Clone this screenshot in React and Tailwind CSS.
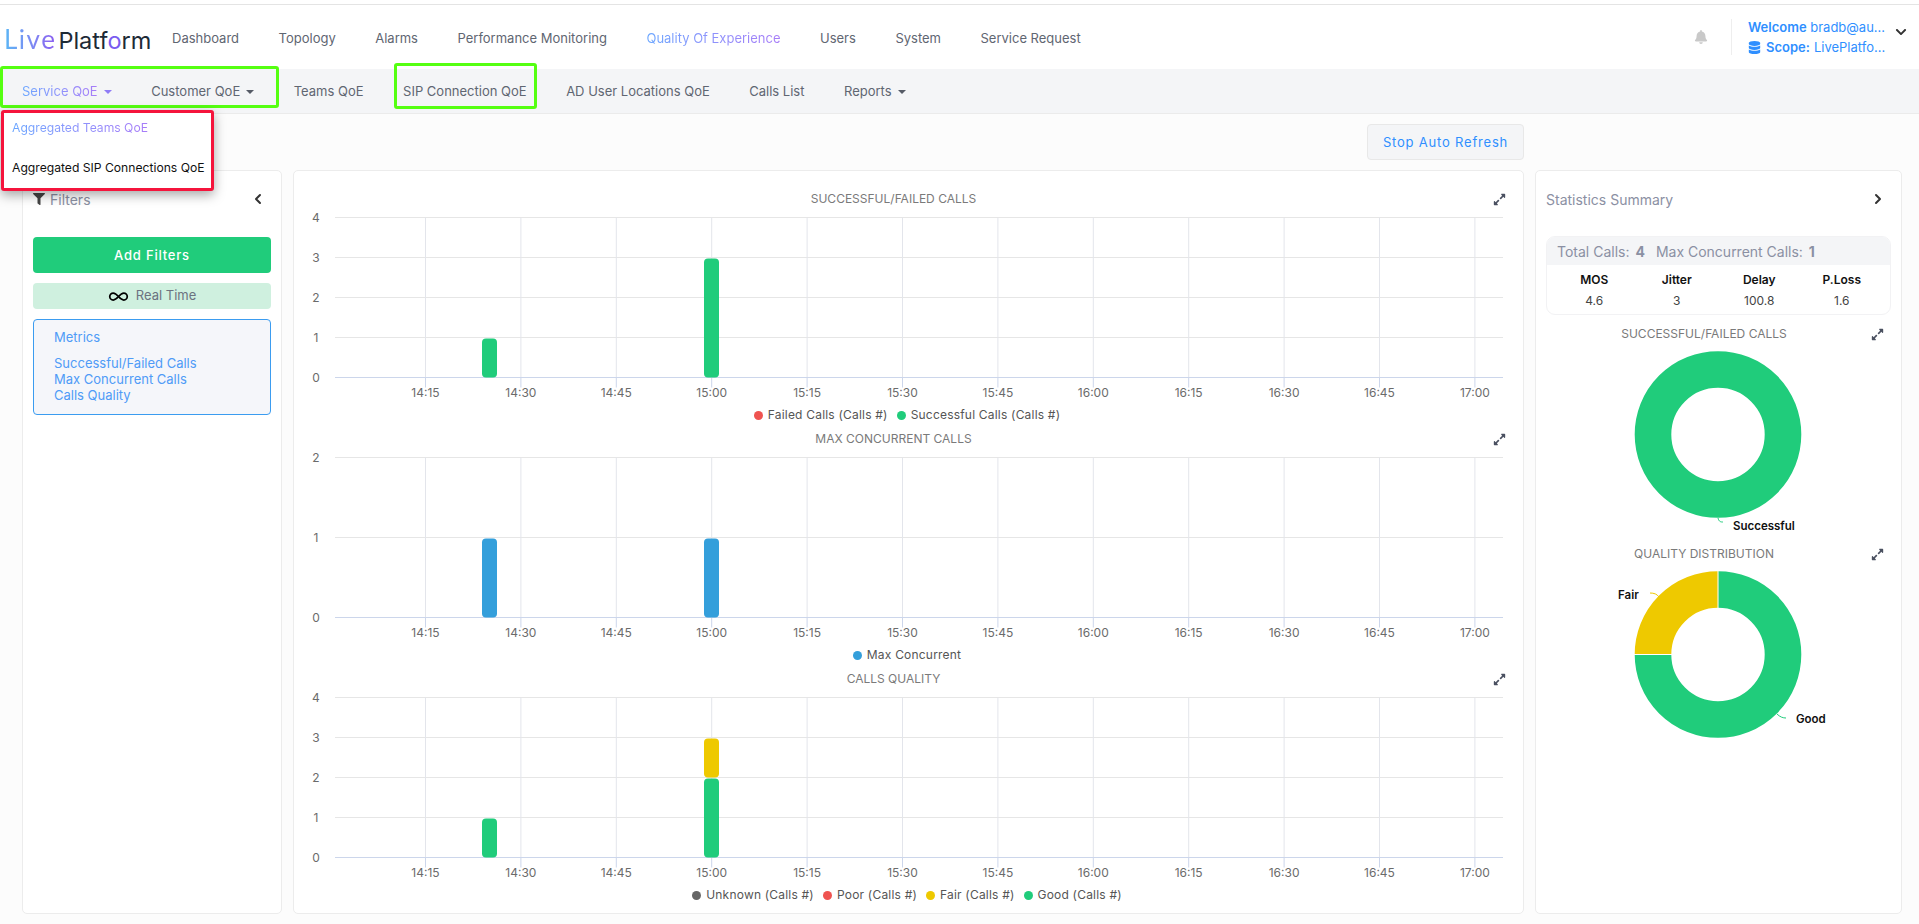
import React from "react";
import { FaBell, FaChevronDown, FaDatabase, FaExpandAlt, FaFilter } from "react-icons/fa";
import { ChevronLeft, ChevronRight, Infinity as InfinityIcon } from "lucide-react";

const GREEN = "#20cc7b";
const BLUE = "#349fdb";
const YELLOW = "#eec900";
const RED = "#ef5350";
const GREY = "#666666";

const topNav = ["Dashboard", "Topology", "Alarms", "Performance Monitoring", "Quality Of Experience", "Users", "System", "Service Request"];
const times = ["14:15", "14:30", "14:45", "15:00", "15:15", "15:30", "15:45", "16:00", "16:15", "16:30", "16:45", "17:00"];

const Caret = ({ className }) => (
    <span className={`ml-[6px] inline-block h-0 w-0 border-x-[4px] border-t-[4px] border-x-transparent ${className}`} />
);

const SubNav = () => (
    <div className="relative flex h-[45px] items-center gap-[39.5px] border-b border-[#ebebeb] bg-[#f4f5f7] pl-[22px] pt-[2px] text-[13px] text-[#5f6672]">
        <span className="flex items-center">
            <span className="bg-linear-to-r from-[#6aa6ff] to-[#a77cf8] bg-clip-text text-transparent">Service QoE</span>
            <Caret className="border-t-[#8f7cf6]" />
        </span>
        <span className="flex items-center">
            Customer QoE
            <Caret className="border-t-[#555b66]" />
        </span>
        <span>Teams QoE</span>
        <span>SIP Connection QoE</span>
        <span>AD User Locations QoE</span>
        <span>Calls List</span>
        <span className="flex items-center">
            Reports
            <Caret className="border-t-[#555b66]" />
        </span>
        {/* highlight boxes + open dropdown sit on top of the bar */}
        <div className="absolute left-0 top-[-3px] h-[42px] w-[279px] rounded-[3px] border-[3px] border-[#55ff11]" />
        <div className="absolute left-[394px] top-[-6px] h-[46px] w-[143px] rounded-[3px] border-[3px] border-[#55ff11]" />
        <div className="absolute left-[1px] top-[41px] z-10 flex h-[81px] w-[213px] flex-col justify-between rounded-[3px] border-[3px] border-[#f5143c] bg-white pb-[11px] pl-[8px] pt-[6px] text-[12.15px] shadow-[0_4px_12px_rgba(0,0,0,0.35)]">
            <span className="w-fit bg-linear-to-r from-[#6aa6ff] to-[#a77cf8] bg-clip-text text-transparent">Aggregated Teams QoE</span>
            <span className="text-[#111111]">Aggregated SIP Connections QoE</span>
        </div>
    </div>
);

const Header = () => (
    <div className="flex h-[64px] items-center bg-white pr-[12px]">
        <div className="flex w-[172px] items-baseline pl-[4px] pt-[5px] text-[23.5px] leading-none">
            <span className="mr-[2px] bg-linear-to-r from-[#58b6f5] to-[#8a5cf0] bg-clip-text font-[Lato,sans-serif] text-[26px] tracking-[1.5px] text-transparent">Live</span>
            <span className="font-normal text-[#1d2a36]">
                Platf<span className="text-[#7a5cf0]">o</span>rm
            </span>
        </div>
        <div className="flex gap-[39.5px] pt-[3px] text-[13px] text-[#5f6672]">
            {topNav.map((item) =>
                item === "Quality Of Experience" ? (
                    <span key={item} className="bg-linear-to-r from-[#6aa6ff] to-[#a77cf8] bg-clip-text text-transparent">{item}</span>
                ) : (
                    <span key={item}>{item}</span>
                )
            )}
        </div>
        <div className="ml-auto flex items-center">
            <FaBell className="text-[14px] text-[#c9c9c9]" />
            <div className="ml-[23px] mr-[16px] h-[36px] w-px bg-[#eeeeee]" />
            <div className="w-[147px] text-[13px] leading-[20px] text-[#2f8fff]">
                <div><span className="font-semibold">Welcome</span> bradb@au...</div>
                <div className="flex items-center">
                    <FaDatabase className="mr-[5px] text-[13px]" />
                    <span className="mr-[4px] font-semibold">Scope:</span> LivePlatfo...
                </div>
            </div>
            <FaChevronDown className="mb-[10px] text-[12px] text-[#333333]" />
        </div>
    </div>
);

const FiltersPanel = () => (
    <div className="w-[260px] shrink-0 rounded-[5px] border border-[#ececec] bg-white px-[10px] pt-[18px]">
        <div className="mb-[28px] flex h-[20px] items-center text-[14px] text-[#8b90a3]">
            <FaFilter className="mr-[5px] text-[12px] text-[#444444]" />
            Filters
            <ChevronLeft className="ml-auto mr-[5px] text-[#333333]" size={16} strokeWidth={3} />
        </div>
        <button className="h-[36px] w-full rounded-[4px] bg-[#20cc7b] pt-[2px] text-[13px] font-medium tracking-[0.8px] text-white">Add Filters</button>
        <div className="mt-[10px] flex h-[26px] items-center justify-center rounded-[4px] bg-[#cff0df] text-[13px] text-[#6b7280]">
            <InfinityIcon className="mr-[7px] text-black" size={21} strokeWidth={2} />
            Real Time
        </div>
        <div className="mt-[10px] h-[96px] rounded-[4px] border border-[#3b9cf0] bg-[#f5f6fa] pl-[20px] pt-[9px] text-[13px] leading-[16px] text-[#4f9bf7]">
            <div>Metrics</div>
            <div className="mt-[10px]">Successful/Failed Calls</div>
            <div>Max Concurrent Calls</div>
            <div>Calls Quality</div>
        </div>
    </div>
);

// plot area is drawn in svg, x/y below are relative to the chart panel
const gridX = (i) => 131.5 + 95.4 * i;
const AXIS_Y = 171.5;

const Plot = ({ maxY, bars }) => {
    const step = 160 / maxY;
    const rows = Array.from({ length: maxY + 1 }, (_, i) => i);
    return (
        <svg width="1230" height="195" className="block">
            {rows.slice(1).map((v) => (
                <line key={v} x1="41" x2="1209" y1={AXIS_Y - v * step} y2={AXIS_Y - v * step} stroke="#e6e6e6" />
            ))}
            {times.map((t, i) => (
                <g key={t}>
                    <line x1={gridX(i)} x2={gridX(i)} y1={AXIS_Y - 160} y2={AXIS_Y} stroke="#e3e5eb" />
                    <line x1={gridX(i)} x2={gridX(i)} y1={AXIS_Y} y2={AXIS_Y + 10} stroke="#ccd6eb" />
                    <text x={gridX(i)} y="191" textAnchor="middle" fontSize="12" fill="#6b6b6b">{t}</text>
                </g>
            ))}
            <line x1="41" x2="1209" y1={AXIS_Y} y2={AXIS_Y} stroke="#ccd6eb" />
            {rows.map((v) => (
                <text key={v} x="22" y={AXIS_Y - v * step + 4} textAnchor="middle" fontSize="12" fill="#6b6b6b">{v}</text>
            ))}
            {bars.map((b) => (
                <rect
                    key={`${b.x}-${b.from}`}
                    x={b.x - 7.5}
                    y={AXIS_Y - b.to * step + 1}
                    width="15"
                    height={(b.to - b.from) * step - 1}
                    rx="4"
                    fill={b.color}
                />
            ))}
        </svg>
    );
};

const ChartBlock = ({ title, maxY, bars, legend }) => (
    <div className="relative h-[240px]">
        <div className="h-[15px] pr-[30px] text-center text-[12px] leading-[16px] text-[#7a7a7a]">{title}</div>
        <FaExpandAlt className="absolute right-[17px] top-[2px] text-[13px] text-[#4a5060]" />
        <Plot maxY={maxY} bars={bars} />
        <div className="mt-[6px] flex h-[16px] items-center justify-center gap-[9px] pr-[3px] text-[12px] tracking-[0.2px] text-[#555555]">
            {legend.map((l) => (
                <div key={l.label} className="flex items-center gap-[5px]">
                    <span className="h-[9px] w-[9px] rounded-full" style={{ backgroundColor: l.color }} />
                    {l.label}
                </div>
            ))}
        </div>
    </div>
);

const ChartsPanel = () => (
    <div className="w-[1231px] shrink-0 rounded-[5px] border border-[#ececec] bg-white pt-[20px]">
        <ChartBlock
            title="SUCCESSFUL/FAILED CALLS"
            maxY={4}
            bars={[
                { x: 195.5, from: 0, to: 1, color: GREEN },
                { x: 417.5, from: 0, to: 3, color: GREEN },
            ]}
            legend={[
                { label: "Failed Calls (Calls #)", color: RED },
                { label: "Successful Calls (Calls #)", color: GREEN },
            ]}
        />
        <ChartBlock
            title="MAX CONCURRENT CALLS"
            maxY={2}
            bars={[
                { x: 195.5, from: 0, to: 1, color: BLUE },
                { x: 417.5, from: 0, to: 1, color: BLUE },
            ]}
            legend={[{ label: "Max Concurrent", color: BLUE }]}
        />
        <ChartBlock
            title="CALLS QUALITY"
            maxY={4}
            bars={[
                { x: 195.5, from: 0, to: 1, color: GREEN },
                { x: 417.5, from: 0, to: 2, color: GREEN },
                { x: 417.5, from: 2, to: 3, color: YELLOW },
            ]}
            legend={[
                { label: "Unknown (Calls #)", color: GREY },
                { label: "Poor (Calls #)", color: RED },
                { label: "Fair (Calls #)", color: YELLOW },
                { label: "Good (Calls #)", color: GREEN },
            ]}
        />
    </div>
);

const DonutBlock = ({ title, children }) => (
    <div className="relative h-[220px]">
        <div className="h-[16px] w-[336px] text-center text-[12px] leading-[16px] text-[#7a7a7a]">{title}</div>
        <FaExpandAlt className="absolute right-[17px] top-[2px] text-[13px] text-[#4a5060]" />
        <svg width="365" height="204" className="block">
            {children}
        </svg>
    </div>
);

const CX = 182;
const CY = 92.5;
const R = 65;
const CIRC = 2 * Math.PI * R;

const SummaryCol = ({ name, value }) => (
    <div className="flex flex-col items-center">
        <span className="font-semibold text-[#111111]">{name}</span>
        <span className="mt-[6px] text-[#444444]">{value}</span>
    </div>
);

const StatsPanel = () => (
    <div className="w-[367px] shrink-0 rounded-[5px] border border-[#ececec] bg-white pt-[18px]">
        <div className="mb-[27px] flex h-[20px] items-center pl-[10px] pr-[15px] text-[14px] text-[#8b90a3]">
            Statistics Summary
            <ChevronRight className="ml-auto text-[#333333]" size={16} strokeWidth={3} />
        </div>
        <div className="ml-[10px] h-[79px] w-[345px] overflow-hidden rounded-[9px] border border-[#f2f2f4]">
            <div className="flex h-[28px] items-center gap-[11px] bg-[#f4f5f7] pl-[10px] text-[14px] text-[#8b90a3]">
                <span>Total Calls: <b className="ml-[2px]">4</b></span>
                <span>Max Concurrent Calls: <b className="ml-[2px]">1</b></span>
            </div>
            <div className="grid h-[50px] grid-cols-4 content-center justify-items-center pb-[1px] pl-[6px] pr-[7px] text-[12px] leading-[15px]">
                <SummaryCol name="MOS" value="4.6" />
                <SummaryCol name="Jitter" value="3" />
                <SummaryCol name="Delay" value="100.8" />
                <SummaryCol name="P.Loss" value="1.6" />
            </div>
        </div>
        <div className="mt-[11px]">
            <DonutBlock title="SUCCESSFUL/FAILED CALLS">
                <circle cx={CX} cy={CY} r={R} fill="none" stroke={GREEN} strokeWidth="36.6" />
                <path d="M182 176 C183 180 185 180 187 180" fill="none" stroke={GREEN} />
                <text x="197" y="188" fontSize="11.5" fontWeight="600" fill="#111111">Successful</text>
            </DonutBlock>
            <DonutBlock title="QUALITY DISTRIBUTION">
                <circle
                    cx={CX}
                    cy={CY}
                    r={R}
                    fill="none"
                    stroke={GREEN}
                    strokeWidth="36.6"
                    strokeDasharray={`${CIRC * 0.75} ${CIRC}`}
                    transform={`rotate(-90 ${CX} ${CY})`}
                />
                <circle
                    cx={CX}
                    cy={CY}
                    r={R}
                    fill="none"
                    stroke={YELLOW}
                    strokeWidth="36.6"
                    strokeDasharray={`${CIRC * 0.25} ${CIRC}`}
                    transform={`rotate(180 ${CX} ${CY})`}
                />
                <line x1={CX} x2={CX} y1={CY - 84} y2={CY - 46} stroke="#ffffff" />
                <line x1={CX - 84} x2={CX - 46} y1={CY} y2={CY} stroke="#ffffff" />
                <path d="M114 31 C118 31 121 32 123 35" fill="none" stroke={YELLOW} />
                <text x="82" y="37" fontSize="11.5" fontWeight="600" fill="#111111">Fair</text>
                <path d="M241 152 C244 155 247 156 250 156" fill="none" stroke={GREEN} />
                <text x="260" y="161" fontSize="11.5" fontWeight="600" fill="#111111">Good</text>
            </DonutBlock>
        </div>
    </div>
);

const App = () => (
    <div className="flex h-[924px] w-full flex-col overflow-hidden bg-[#fcfcfc] font-[Inter,sans-serif]">
        <div className="h-[5px] border-b border-[#e4e4e4] bg-white" />
        <Header />
        <SubNav />
        <div className="flex h-[56px] items-start justify-end pr-[395px] pt-[10px]">
            <button className="h-[36px] w-[157px] rounded-[4px] border border-[#e8e8e8] bg-[#f4f5f7] pt-[2px] text-[13px] tracking-[0.8px] text-[#2f8fff]">Stop Auto Refresh</button>
        </div>
        <div className="flex h-[744px] gap-[11px] pl-[22px]">
            <FiltersPanel />
            <ChartsPanel />
            <StatsPanel />
        </div>
    </div>
);

export default App;
